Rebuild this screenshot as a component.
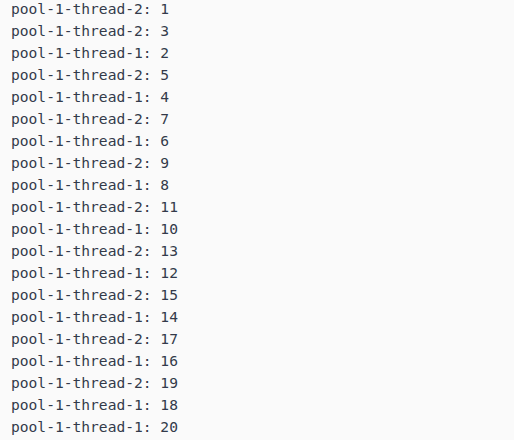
const lines: [number, number][] = [
  [2, 1], [2, 3], [1, 2], [2, 5], [1, 4], [2, 7], [1, 6], [2, 9], [1, 8], [2, 11],
  [1, 10], [2, 13], [1, 12], [2, 15], [1, 14], [2, 17], [1, 16], [2, 19], [1, 18], [1, 20],
]

export default function App() {
  return (
    <div className="h-[440px] w-[514px] overflow-hidden bg-[#fafafa]">
      <pre className="-mt-[2px] px-[11px] font-['DejaVu_Sans_Mono',monospace] text-[14.6px] leading-[22px] text-[#333a4a]">
        {lines.map(([t, n], i) => (
          <div key={i}>{`pool-1-thread-${t}: ${n}`}</div>
        ))}
      </pre>
    </div>
  )
}
